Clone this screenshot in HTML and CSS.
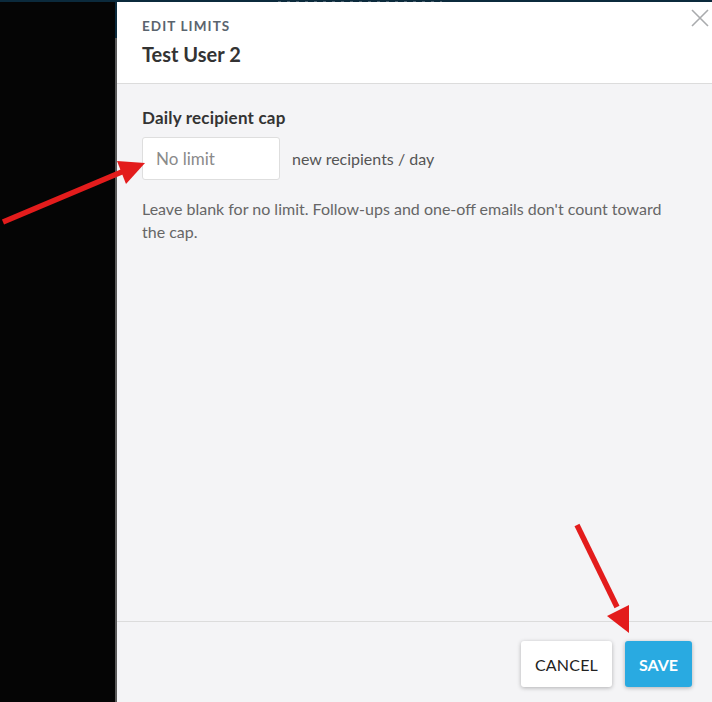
FILE: index.html
```html
<!DOCTYPE html>
<html lang="en">
<head>
<meta charset="utf-8">
<title>Edit limits</title>
<link rel="stylesheet" href="styles.css">
</head>
<body>
<div class="topbar"></div>
<div class="stage">
  <div class="backdrop"></div>
  <div class="edge"></div>
  <div class="modal">
    <header class="modal-header">
      <div class="eyebrow">EDIT LIMITS</div>
      <h1 class="title">Test User 2</h1>
      <button class="close" aria-label="Close">
        <svg width="18" height="18" viewBox="0 0 18 18"><path d="M1 1 L17 17 M17 1 L1 17" stroke="#a9abad" stroke-width="1.6" fill="none"/></svg>
      </button>
    </header>
    <section class="modal-body">
      <label class="field-label" for="cap">Daily recipient cap</label>
      <div class="field-row">
        <input id="cap" class="cap-input" type="text" placeholder="No limit">
        <span class="unit">new recipients / day</span>
      </div>
      <p class="help">Leave blank for no limit. Follow-ups and one-off emails don't count toward the cap.</p>
    </section>
    <footer class="modal-footer">
      <button class="btn btn-cancel">CANCEL</button>
      <button class="btn btn-save">SAVE</button>
    </footer>
  </div>
</div>
<svg class="arrows" width="712" height="702" viewBox="0 0 712 702">
  <g fill="#e31c1c" stroke="#e31c1c">
    <line x1="3" y1="222" x2="124" y2="171" stroke-width="5.5"/>
    <polygon points="145,163 117,161 126,184" stroke="none"/>
    <line x1="577" y1="525" x2="617" y2="607" stroke-width="5.5"/>
    <polygon points="629,633 629,605 607,616" stroke="none"/>
  </g>
</svg>
</body>
</html>
```
FILE: styles.css
```css
html, body {
  margin: 0;
  padding: 0;
  height: 100%;
}

body {
  background: #050505;
  font-family: "Lato", "Liberation Sans", sans-serif;
  overflow: hidden;
  position: relative;
}

/* page navigation bar peeking above the dialog */
.topbar {
  height: 2px;
  background:
    repeating-linear-gradient(90deg, transparent 0 6px, rgba(150, 160, 170, 0.45) 6px 9px) 272px 1px / 170px 1px no-repeat,
    #0b2a3c;
}

.stage {
  display: flex;
  height: 700px;
}

.backdrop {
  width: 115px;
  flex: none;
}

.edge {
  width: 2px;
  flex: none;
  background: linear-gradient(#0b2a3c 0 36px, #5a5a5a 36px);
}

.modal {
  flex: 1;
  display: flex;
  flex-direction: column;
  background: #f4f4f6;
}

.modal-header {
  position: relative;
  background: #fff;
  border-bottom: 1px solid #dcdcdc;
  padding: 16px 25px 0;
  height: 65px;
}

.eyebrow {
  font-size: 13.5px;
  font-weight: 700;
  letter-spacing: 1.1px;
  color: #5a646e;
  line-height: 16px;
}

.title {
  margin: 8px 0 0;
  font-size: 20px;
  font-weight: 700;
  color: #333;
  line-height: 24px;
}

.close {
  position: absolute;
  top: 7px;
  right: 3px;
  padding: 0;
  border: 0;
  background: none;
  width: 18px;
  height: 18px;
}

.close svg { display: block; }

.modal-body {
  flex: 1;
  padding: 23px 25px 0;
  border-bottom: 1px solid #dcdcdc;
}

.field-label {
  display: block;
  font-size: 17px;
  letter-spacing: 0.2px;
  font-weight: 700;
  color: #333;
  line-height: 21px;
}

.field-row {
  display: flex;
  align-items: center;
  gap: 12px;
  margin-top: 9px;
}

.cap-input {
  box-sizing: border-box;
  width: 138px;
  height: 43px;
  border: 1px solid #dedede;
  border-radius: 3px;
  background: #fff;
  padding: 0 13px;
  font-family: inherit;
  font-size: 17px;
  color: #333;
  outline: none;
}

.cap-input::placeholder {
  color: #8a8a8a;
}

.unit {
  font-size: 16px;
  color: #555;
}

.help {
  margin: 17px 0 0;
  font-size: 16px;
  line-height: 23px;
  color: #666;
  max-width: 530px;
}

.modal-footer {
  height: 80px;
  display: flex;
  justify-content: flex-end;
  align-items: flex-start;
  gap: 13px;
  padding: 19px 20px 0;
  box-sizing: border-box;
}

.btn {
  height: 46px;
  border: 0;
  border-radius: 3px;
  font-family: inherit;
  font-size: 16px;
  cursor: pointer;
  box-shadow: 0 1px 4px rgba(0, 0, 0, 0.28);
}

.btn-cancel {
  width: 91px;
  background: #fff;
  color: #222;
  font-weight: 400;
  letter-spacing: 0.2px;
}

.btn-save {
  width: 67px;
  background: #29aae1;
  color: #fff;
  font-weight: 700;
}

.arrows {
  position: absolute;
  left: 0;
  top: 0;
  pointer-events: none;
}
```
